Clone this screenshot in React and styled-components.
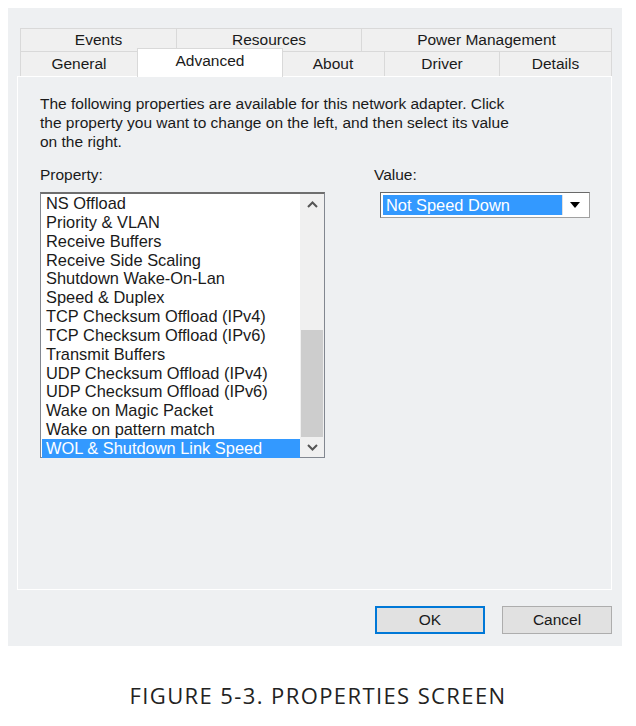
import React from "react";
import styled, { createGlobalStyle } from "styled-components";

const GlobalStyle = createGlobalStyle`
  html, body {
    margin: 0;
    padding: 0;
    background: #ffffff;
  }
  * {
    box-sizing: border-box;
  }
`;

const Page = styled.div`
  width: 636px;
  height: 726px;
  padding: 8px 0 0 8px;
  background: #ffffff;
  font-family: "Liberation Sans", Arial, sans-serif;
`;

const Dialog = styled.div`
  width: 614px;
  height: 638px;
  background: #eef0f2;
  padding: 20px 0 0 0;
  display: flex;
  flex-direction: column;
`;

const TabArea = styled.div`
  margin-left: 12px;
  width: 592px;
  display: flex;
  flex-direction: column;
`;

const TabRow = styled.div`
  display: flex;
  height: ${(p) => p.h}px;
  position: relative;
`;

const Tab = styled.div`
  width: ${(p) => p.w}px;
  height: 100%;
  display: flex;
  align-items: center;
  justify-content: center;
  font-size: 15.5px;
  color: #1a1a1a;
  background: #f0f0f0;
  border: 1px solid #d9d9d9;
  border-left-width: ${(p) => (p.first ? 1 : 0)}px;
  border-bottom: none;
  padding-top: 0;
`;

const ActiveTab = styled(Tab)`
  position: relative;
  z-index: 2;
  background: #ffffff;
  border: 1px solid #d9d9d9;
  border-bottom: none;
  height: 29px;
  margin-top: -3px;
  margin-left: -1px;
  margin-right: -1px;
  width: ${(p) => p.w + 2}px;
  align-items: flex-start;
  padding-top: 3px;
`;

const Panel = styled.div`
  margin-left: 9px;
  width: 595px;
  height: 514px;
  border: 1px solid #ffffff;
  background: #eef0f2;
  padding: 17px 0 0 22px;
  display: flex;
  flex-direction: column;
`;

const Description = styled.p`
  margin: 0;
  font-size: 15.5px;
  line-height: 19px;
  color: #1a1a1a;
  white-space: nowrap;
`;

const Columns = styled.div`
  display: flex;
  margin-top: 14px;
`;

const PropertyColumn = styled.div`
  width: 340px;
  display: flex;
  flex-direction: column;
`;

const ValueColumn = styled.div`
  display: flex;
  flex-direction: column;
`;

const Label = styled.div`
  font-size: 15.5px;
  line-height: 19px;
  color: #1a1a1a;
  margin-left: ${(p) => p.indent || 0}px;
`;

const ListBox = styled.div`
  margin-top: 8px;
  width: 285px;
  height: 266px;
  border: 1px solid #828790;
  border-top: 2px solid #6e6e6e;
  background: #ffffff;
  display: flex;
  padding: 0 1px 1px 1px;
`;

const Items = styled.div`
  flex: 1;
  display: flex;
  flex-direction: column;
`;

const Item = styled.div`
  height: 18.85px;
  line-height: 18.85px;
  font-size: 16.4px;
  padding-left: 4px;
  white-space: nowrap;
  color: ${(p) => (p.selected ? "#ffffff" : "#1a1a1a")};
  background: ${(p) => (p.selected ? "#3399ff" : "transparent")};
`;

const ScrollBar = styled.div`
  width: 24px;
  margin: 0 -1px -1px 0;
  background: #f0f0f0;
  display: flex;
  flex-direction: column;
  align-items: center;
`;

const ScrollArrow = styled.div`
  height: 20px;
  width: 100%;
  display: flex;
  align-items: center;
  justify-content: center;
`;

const Track = styled.div`
  flex: 1;
  width: 100%;
  display: flex;
  flex-direction: column;
  justify-content: flex-end;
  padding: 0 1px;
`;

const Thumb = styled.div`
  height: 107px;
  background: #cdcdcd;
`;

const Combo = styled.div`
  margin-top: 8px;
  width: 210px;
  height: 26px;
  border: 1px solid #a0a0a0;
  border-top-color: #696969;
  border-left-color: #696969;
  background: #ffffff;
  display: flex;
  padding: 2px;
`;

const ComboText = styled.div`
  flex: 1;
  background: #3399ff;
  color: #ffffff;
  font-size: 16.4px;
  line-height: 20px;
  padding-left: 3px;
`;

const ComboButton = styled.div`
  width: 25px;
  display: flex;
  align-items: center;
  justify-content: center;
  border-left: 1px solid #e0e0e0;
`;

const Footer = styled.div`
  display: flex;
  justify-content: flex-end;
  gap: 17px;
  padding: 16px 10px 0 0;
`;

const Button = styled.div`
  width: 110px;
  height: 28px;
  display: flex;
  align-items: center;
  justify-content: center;
  font-size: 15.5px;
  color: #1a1a1a;
  background: #e1e1e1;
  border: ${(p) => (p.primary ? "2px solid #0078d7" : "1px solid #adadad")};
`;

const Caption = styled.div`
  margin-top: 34px;
  width: 636px;
  margin-left: -8px;
  text-align: center;
  font-family: "Open Sans", sans-serif;
  font-size: 22px;
  letter-spacing: 1.4px;
  color: #222222;
`;

const Chevron = ({ up }) => (
  <svg width="11" height="7" viewBox="0 0 11 7">
    <path
      d={up ? "M1 6 L5.5 1.5 L10 6" : "M1 1 L5.5 5.5 L10 1"}
      fill="none"
      stroke="#555"
      strokeWidth="2"
    />
  </svg>
);

const topTabs = [
  { label: "Events", w: 157 },
  { label: "Resources", w: 185 },
  { label: "Power Management", w: 250 },
];

const bottomTabs = [
  { label: "General", w: 118 },
  { label: "Advanced", w: 144, active: true },
  { label: "About", w: 103 },
  { label: "Driver", w: 115 },
  { label: "Details", w: 112 },
];

const properties = [
  "NS Offload",
  "Priority & VLAN",
  "Receive Buffers",
  "Receive Side Scaling",
  "Shutdown Wake-On-Lan",
  "Speed & Duplex",
  "TCP Checksum Offload (IPv4)",
  "TCP Checksum Offload (IPv6)",
  "Transmit Buffers",
  "UDP Checksum Offload (IPv4)",
  "UDP Checksum Offload (IPv6)",
  "Wake on Magic Packet",
  "Wake on pattern match",
  "WOL & Shutdown Link Speed",
];

export default function App() {
  return (
    <Page>
      <GlobalStyle />
      <Dialog>
        <TabArea>
          <TabRow h={23}>
            {topTabs.map((t, i) => (
              <Tab key={t.label} w={t.w} first={i === 0}>
                {t.label}
              </Tab>
            ))}
          </TabRow>
          <TabRow h={25}>
            {bottomTabs.map((t, i) =>
              t.active ? (
                <ActiveTab key={t.label} w={t.w}>
                  {t.label}
                </ActiveTab>
              ) : (
                <Tab key={t.label} w={t.w} first={i === 0}>
                  {t.label}
                </Tab>
              )
            )}
          </TabRow>
        </TabArea>
        <Panel>
          <Description>
            The following properties are available for this network adapter. Click
            <br />
            the property you want to change on the left, and then select its value
            <br />
            on the right.
          </Description>
          <Columns>
            <PropertyColumn>
              <Label>Property:</Label>
              <ListBox>
                <Items>
                  {properties.map((p, i) => (
                    <Item key={p} selected={i === properties.length - 1}>
                      {p}
                    </Item>
                  ))}
                </Items>
                <ScrollBar>
                  <ScrollArrow>
                    <Chevron up />
                  </ScrollArrow>
                  <Track>
                    <Thumb />
                  </Track>
                  <ScrollArrow>
                    <Chevron />
                  </ScrollArrow>
                </ScrollBar>
              </ListBox>
            </PropertyColumn>
            <ValueColumn>
              <Label indent={-6}>Value:</Label>
              <Combo>
                <ComboText>Not Speed Down</ComboText>
                <ComboButton>
                  <svg width="10" height="6" viewBox="0 0 10 6">
                    <path d="M0 0 L10 0 L5 6 Z" fill="#000" />
                  </svg>
                </ComboButton>
              </Combo>
            </ValueColumn>
          </Columns>
        </Panel>
        <Footer>
          <Button primary>OK</Button>
          <Button>Cancel</Button>
        </Footer>
      </Dialog>
      <Caption>FIGURE 5-3. PROPERTIES SCREEN</Caption>
    </Page>
  );
}
